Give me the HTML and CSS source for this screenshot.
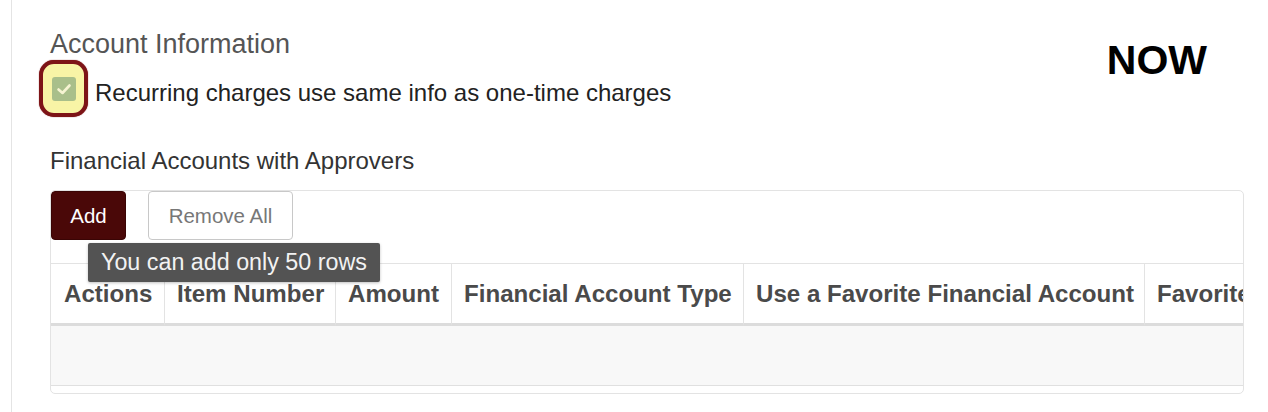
FILE: index.html
```html
<!DOCTYPE html>
<html lang="en">
<head>
<meta charset="utf-8">
<title>Account Information</title>
<link rel="stylesheet" href="styles.css">
</head>
<body>
<div class="page">
  <div class="top">
    <div class="info">
      <h2 class="section-title">Account Information</h2>
      <label class="check-row">
        <span class="check-ring">
          <span class="check-box">
            <svg viewBox="0 0 24 24" width="24" height="24" aria-hidden="true"><path d="M6.5 12.5 L10.5 16 L17.5 8.5" fill="none" stroke="#f6f4d2" stroke-width="2.6" stroke-linecap="round" stroke-linejoin="round"/></svg>
          </span>
        </span>
        <span class="check-label">Recurring charges use same info as one-time charges</span>
      </label>
    </div>
    <div class="now">NOW</div>
  </div>
  <h3 class="sub-title">Financial Accounts with Approvers</h3>
  <div class="panel">
    <div class="toolbar">
      <button class="btn btn-add" type="button">Add</button>
      <button class="btn btn-remove" type="button">Remove All</button>
      <div class="tooltip">You can add only 50 rows</div>
    </div>
    <table class="grid">
      <colgroup>
        <col class="c1"><col class="c2"><col class="c3"><col class="c4"><col class="c5"><col class="c6">
      </colgroup>
      <thead>
        <tr>
          <th>Actions</th>
          <th>Item Number</th>
          <th>Amount</th>
          <th>Financial Account Type</th>
          <th>Use a Favorite Financial Account</th>
          <th>Favorite Financial Account</th>
        </tr>
      </thead>
      <tbody>
        <tr><td></td><td></td><td></td><td></td><td></td><td></td></tr>
      </tbody>
    </table>
  </div>
</div>
</body>
</html>
```

FILE: styles.css
```css
* { box-sizing: border-box; }
html, body { margin: 0; padding: 0; background: #fff; }
body { font-family: "Liberation Sans", Arial, sans-serif; }

.page {
  margin-left: 11px;
  border-left: 1px solid #e4e4e4;
  height: 412px;
  padding: 29px 24px 0 38px;
  overflow: hidden;
}

.top {
  display: flex;
  justify-content: space-between;
  align-items: flex-start;
}

.section-title {
  margin: 0;
  font-size: 27px;
  line-height: 30px;
  font-weight: normal;
  color: #555;
}

.check-row {
  display: flex;
  align-items: center;
  margin-top: 1px;
  margin-left: -11px;
}

.check-ring {
  width: 49px;
  height: 57px;
  border: 4px solid #7d1417;
  border-radius: 15px;
  background: #f8f4a6;
  display: flex;
  align-items: center;
  justify-content: center;
  box-shadow: 0 0 1px #7d1417;
}

.check-box {
  width: 24px;
  height: 24px;
  border-radius: 3px;
  background: #a9bf8a;
  display: flex;
}

.check-label {
  margin-left: 7px;
  margin-top: 8px;
  font-size: 24px;
  line-height: 28px;
  color: #222;
}

.now {
  margin-top: 7px;
  margin-right: 37px;
  font-size: 41px;
  line-height: 48px;
  font-weight: bold;
  color: #000;
}

.sub-title {
  margin: 30px 0 0;
  font-size: 24px;
  line-height: 28px;
  font-weight: normal;
  color: #333;
}

.panel {
  margin-top: 15px;
  width: 1194px;
  border: 1px solid #e3e3e3;
  border-radius: 5px;
  padding-bottom: 7px;
  overflow: hidden;
}

.toolbar {
  position: relative;
  display: flex;
  align-items: flex-start;
  height: 72px;
}

.btn {
  height: 49px;
  border-radius: 4px;
  font-family: "Liberation Sans", Arial, sans-serif;
  font-size: 20.5px;
  padding: 0;
  cursor: pointer;
}

.btn-add {
  width: 75px;
  background: #4a0808;
  color: #fff;
  border: 1px solid #3a0505;
}

.btn-remove {
  width: 145px;
  margin-left: 22px;
  background: #fff;
  color: #777;
  border: 1px solid #c8c8c8;
}

.tooltip {
  position: absolute;
  left: 37px;
  top: 52px;
  z-index: 2;
  height: 39px;
  padding: 0 13px;
  background: #535353;
  color: #f2f2f2;
  font-size: 23.3px;
  line-height: 39px;
  white-space: nowrap;
  border-radius: 2px;
  box-shadow: 0 1px 3px rgba(0,0,0,0.25);
}

.grid {
  table-layout: fixed;
  border-collapse: separate;
  border-spacing: 0;
  width: 1493px;
}

.c1 { width: 113px; }
.c2 { width: 171px; }
.c3 { width: 116px; }
.c4 { width: 292px; }
.c5 { width: 401px; }
.c6 { width: 400px; }

.grid th {
  height: 63px;
  padding: 0 12px;
  border-top: 1px solid #e3e3e3;
  border-bottom: 3px solid #dcdcdc;
  border-left: 1px solid #e3e3e3;
  text-align: left;
  font-size: 24.1px;
  font-weight: bold;
  color: #4a4a4a;
  white-space: nowrap;
  overflow: hidden;
}

.grid th:first-child {
  border-left: none;
  padding-left: 13px;
}

.grid td {
  height: 60px;
  background: #f8f8f8;
  border-bottom: 1px solid #e0e0e0;
  padding: 0;
}
```
